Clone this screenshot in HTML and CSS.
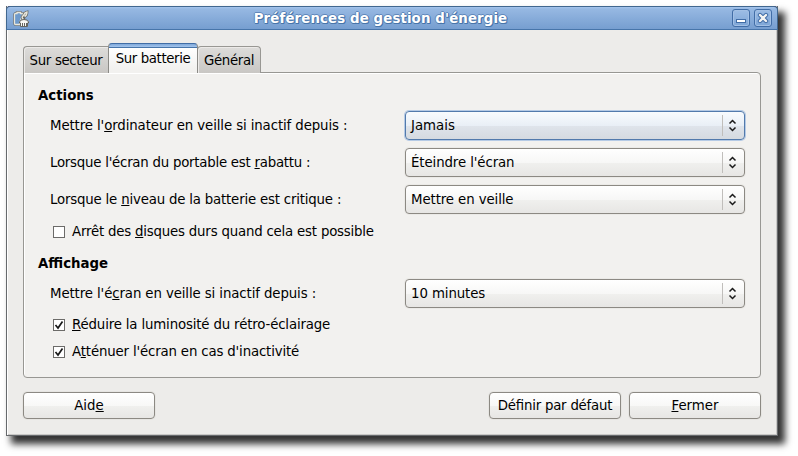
FILE: index.html
```html
<!DOCTYPE html>
<html lang="fr">
<head>
<meta charset="utf-8">
<title>Préférences de gestion d'énergie</title>
<link rel="stylesheet" href="styles.css">
</head>
<body>
<div class="window">
  <header class="titlebar">
    <svg class="app-icon" width="18" height="18" viewBox="0 0 18 18" fill="none">
      <path d="M3.500 3.500H5V2.500H8.500V3.500H12V14.500H3.500Q2.500 14.500 2.500 13.500V4.500Q2.500 3.500 3.500 3.500Z" fill="#6e9acc" stroke="#65655f" stroke-width="2.400"/>
      <path d="M3.500 3.500H5V2.500H8.500V3.500H11L8 12V14.500H3.500Q2.500 14.500 2.500 13.500V4.500Q2.500 3.500 3.500 3.500Z" fill="#6e9acc" stroke="#e7e6dc" stroke-width="1.300"/>
      <path d="M12 10Q8.500 7 11.500 5.500Q12.500 2.500 15 2Q15 5.500 12.500 6.500" stroke="#65655f" stroke-width="2.800"/>
      <path d="M12 10Q8.500 7 11.500 5.500Q12.500 2.500 15 2Q15 5.500 12.500 6.500" stroke="#e7e6dc" stroke-width="1.400"/>
      <path d="M7.500 12Q8 9.500 12 9.500Q16 9.500 16.500 12V13H15.500V16.500H8.500V13H7.500Z" fill="#f8f8f4" stroke="#65655f"/>
      <path d="M10.500 13V16M12.500 13V16M14.500 13V16" stroke="#65655f"/>
    </svg>
    <h1 class="title">Préférences de gestion d'énergie</h1>
    <div class="controls">
      <button class="control" aria-label="Réduire"><svg width="16" height="16" viewBox="0 0 16 16"><rect x="3.500" y="9.500" width="9" height="3" fill="#fff" stroke="#416da6"/></svg></button>
      <button class="control" aria-label="Fermer"><svg width="16" height="16" viewBox="0 0 16 16" fill="none" stroke-linecap="round"><path d="M5 5L11 11M11 5L5 11" stroke="#416da6" stroke-width="4.400"/><path d="M5 5L11 11M11 5L5 11" stroke="#f5f5f3" stroke-width="2.400"/></svg></button>
    </div>
  </header>
  <main class="body">
    <nav class="tabs">
      <div class="tab tab-first"><span class="text">Sur secteur</span></div>
      <div class="tab active"><span class="text">Sur batterie</span></div>
      <div class="tab tab-last"><span class="text">Général</span></div>
    </nav>
    <section class="panel">
      <h2 class="heading">Actions</h2>
      <div class="fields">
        <div class="field"><span class="label l1">Mettre l'<u>o</u>rdinateur en veille si inactif depuis :</span><div class="combo focused"><span>Jamais</span><i class="divider"></i><svg width="9" height="13" viewBox="0 0 9 13"><path d="M1.500 4.500L4.500 1.500L7.500 4.500M1.500 8.500L4.500 11.500L7.500 8.500"/></svg></div></div>
        <div class="field"><span class="label l2">Lorsque l'écran du portable est <u>r</u>abattu :</span><div class="combo"><span>Éteindre l'écran</span><i class="divider"></i><svg width="9" height="13" viewBox="0 0 9 13"><path d="M1.500 4.500L4.500 1.500L7.500 4.500M1.500 8.500L4.500 11.500L7.500 8.500"/></svg></div></div>
        <div class="field"><span class="label l3">Lorsque le <u>n</u>iveau de la batterie est critique :</span><div class="combo"><span>Mettre en veille</span><i class="divider"></i><svg width="9" height="13" viewBox="0 0 9 13"><path d="M1.500 4.500L4.500 1.500L7.500 4.500M1.500 8.500L4.500 11.500L7.500 8.500"/></svg></div></div>
      </div>
      <div class="check disks"><i class="box"></i><span>Arrêt des <u>d</u>isques durs quand cela est possible</span></div>
      <h2 class="heading display">Affichage</h2>
      <div class="fields">
        <div class="field"><span class="label l4">Mettre l'é<u>c</u>ran en veille si inactif depuis :</span><div class="combo"><span>10 minutes</span><i class="divider"></i><svg width="9" height="13" viewBox="0 0 9 13"><path d="M1.500 4.500L4.500 1.500L7.500 4.500M1.500 8.500L4.500 11.500L7.500 8.500"/></svg></div></div>
      </div>
      <div class="check dim"><i class="box"><svg width="10" height="10" viewBox="0 0 10 10"><path d="M1.500 5L4 8L8.500 1.500"/></svg></i><span><u>R</u>éduire la luminosité du rétro-éclairage</span></div>
      <div class="check idle"><i class="box"><svg width="10" height="10" viewBox="0 0 10 10"><path d="M1.500 5L4 8L8.500 1.500"/></svg></i><span>A<u>t</u>ténuer l'écran en cas d'inactivité</span></div>
    </section>
    <footer class="actions">
      <button class="button help"><span>Aid<u>e</u></span></button>
      <button class="button defaults"><span>Définir par défaut</span></button>
      <button class="button"><span><u>F</u>ermer</span></button>
    </footer>
  </main>
</div>
</body>
</html>
```
FILE: styles.css
```css
* { box-sizing: border-box; }
body {
  margin: 0;
  padding: 6px;
  height: 456px;
  overflow: hidden;
  background: #fff;
  color: #000;
  font: 13.33px/16px "DejaVu Sans", sans-serif;
  font-feature-settings: "liga" 1;
}
button { font: inherit; font-feature-settings: inherit; color: inherit; padding: 0; margin: 0; }
u { text-decoration: underline; text-decoration-thickness: 1px; text-underline-offset: 1px; text-decoration-skip-ink: none; }
.window {
  width: 772px;
  height: 430px;
  border: 1px solid #66696c;
  border-top: 0;
  background: linear-gradient(#7a3558 6px, #edecea 6px);
  box-shadow: inset 1px 0 #fff, inset -1px -1px #c9c8c6, 6px 7px 7px 1px rgba(0, 0, 0, .8);
}
.titlebar {
  display: flex;
  align-items: center;
  height: 24px;
  margin: 0 -1px;
  padding: 0 5px 0 7px;
  border: 1px solid #41678f;
  border-bottom-color: #4775aa;
  border-radius: 4px 4px 0 0;
  background: linear-gradient(#a4c4ed, #96b8e2 2px, #769ed0);
}
.app-icon { flex: none; margin-top: 1px; margin-left: -2px; }
.title {
  flex: 1;
  margin: 0 1px 0 0;
  text-align: center;
  color: #fff;
  font: bold 13.33px/16px "DejaVu Sans", sans-serif;
  letter-spacing: .12px;
  position: relative;
  top: 1px;
  text-shadow: 1px 1px #4775aa, -1px 0 #6088bb, 0 -1px #6088bb, 1px 0 #4775aa, 0 1px #4775aa;
}
.controls { display: flex; gap: 4px; }
.control {
  display: flex;
  width: 18px;
  height: 18px;
  border: 1px solid #416da6;
  border-radius: 3px;
  background: linear-gradient(#9dbde5, #7da5d6);
  box-shadow: inset 0 0 0 1px #a2c0e5;
}
.body { padding: 13px 16px 0; }
.tabs { display: flex; align-items: flex-end; height: 30px; }
.tab {
  height: 27px;
  padding-top: 6px;
  text-align: center;
  white-space: nowrap;
  letter-spacing: -.33px;
  border: 1px solid #989793;
  border-bottom: 0;
  border-radius: 4px 4px 0 0;
  background: linear-gradient(#dddcda, #c9c7c4);
  box-shadow: inset 1px 1px #eceae8;
}
.tab-first { width: 85px; border-right: 0; border-top-right-radius: 0; }
.tab.active {
  position: relative;
  width: 90px;
  height: 30px;
  margin: 0 -1px 0 0;
  padding-top: 7px;
  letter-spacing: -.4px;
  border: 1px solid #8c8b87;
  border-top-color: #416da6;
  border-bottom: 0;
  background: linear-gradient(#7fa9da 0, #a4c4ed 3px, #4775aa 3px, #4775aa 4px, #fff 4px, #f2f1ef 25px);
  box-shadow: none;
}
.tab-last { width: 64px; }
.panel {
  height: 306px;
  margin-top: -1px;
  padding: 15px 15px 0 14px;
  border: 1px solid #989793;
  border-radius: 0 4px 4px 4px;
  background: #f2f1ef;
  box-shadow: inset 1px 1px #fff;
}
.heading { margin: 0; font-size: 13.33px; line-height: 16px; }
.fields { display: grid; gap: 8px; margin-top: 7px; padding-left: 12px; }
.field { display: flex; align-items: center; justify-content: space-between; height: 29px; }
.label { white-space: nowrap; }
.l1 { letter-spacing: -.11px; }
.l2 { letter-spacing: -.24px; }
.l3 { letter-spacing: -.19px; }
.l4 { letter-spacing: -.11px; }
.combo {
  display: flex;
  align-items: center;
  width: 340px;
  height: 29px;
  padding: 0 7px 0 5px;
  border: 1px solid #8c8983;
  border-radius: 4px;
  background: linear-gradient(#fff, #f7f7f6 50%, #f0f0ee 51%, #e7e6e4);
  box-shadow: 0 0 0 1px #ebeae7;
}
.combo span { flex: 1; letter-spacing: -.1px; }
.combo.focused span { letter-spacing: 0; }
.combo svg, .box svg { fill: none; stroke: #1a1a1a; stroke-width: 1.500; }
.divider { width: 1px; height: 21px; margin-right: 5px; background: #c0bebb; }
.focused {
  border-color: #527aac;
  background: linear-gradient(#f8fbfe, #e9eff6 50%, #dfe4eb 51%, #d5dae0);
  box-shadow: 0 0 0 1px #b5cae5;
}
.check { display: flex; align-items: center; gap: 7px; height: 16px; padding-left: 15px; letter-spacing: -.16px; }
.box { width: 12px; height: 12px; border: 1px solid #6c6b69; background: #fff; }
.box svg { display: block; stroke-width: 1.700; }
.disks { margin-top: 10px; letter-spacing: -.2px; }
.display { margin-top: 16px; }
.dim { margin-top: 9px; }
.idle { margin-top: 11px; }
.actions { display: flex; gap: 8px; margin-top: 14px; }
.button {
  width: 132px;
  height: 27px;
  border: 1px solid #8c8983;
  border-radius: 4px;
  background: linear-gradient(#fff, #f8f8f7 50%, #f0f0ee 51%, #e7e6e4);
  box-shadow: 0 0 0 1px #e6e5e2;
}
.help { margin-right: auto; }
.defaults { letter-spacing: -.22px; }
```
